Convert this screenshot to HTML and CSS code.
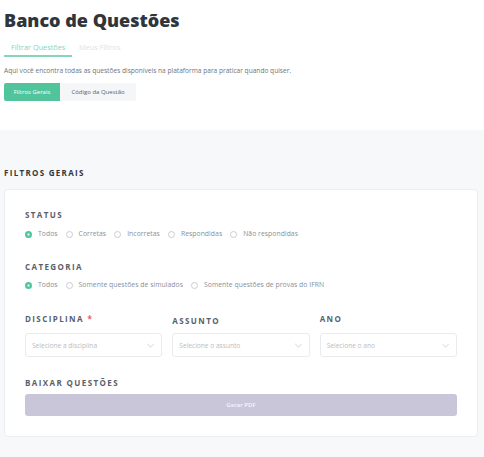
FILE: index.html
```html
<!DOCTYPE html>
<html lang="pt-BR">
<head>
<meta charset="utf-8">
<title>Banco de Questões</title>
<link rel="stylesheet" href="styles.css">
</head>
<body>
<header class="top">
  <h1 class="title">Banco de Questões</h1>
  <nav class="tabs">
    <span class="tab tab-active">Filtrar Questões</span>
    <span class="tab">Meus Filtros</span>
  </nav>
  <p class="desc">Aqui você encontra todas as questões disponíveis na plataforma para praticar quando quiser.</p>
  <div class="seg">
    <button class="seg-btn seg-active">Filtros Gerais</button>
    <button class="seg-btn">Código da Questão</button>
  </div>
</header>
<main class="section">
  <h2 class="section-title">FILTROS GERAIS</h2>
  <div class="card">
    <div class="label">STATUS</div>
    <div class="radios">
      <label class="radio"><span class="dot dot-on"></span>Todos</label>
      <label class="radio"><span class="dot"></span>Corretas</label>
      <label class="radio"><span class="dot"></span>Incorretas</label>
      <label class="radio"><span class="dot"></span>Respondidas</label>
      <label class="radio"><span class="dot"></span>Não respondidas</label>
    </div>
    <div class="label label-gap">CATEGORIA</div>
    <div class="radios radios-tight">
      <label class="radio"><span class="dot dot-on"></span>Todos</label>
      <label class="radio"><span class="dot"></span>Somente questões de simulados</label>
      <label class="radio"><span class="dot"></span>Somente questões de provas do IFRN</label>
    </div>
    <div class="fields">
      <div class="field">
        <div class="label">DISCIPLINA <span class="req">*</span></div>
        <div class="select"><span>Selecione a disciplina</span><svg class="chev" viewBox="0 0 10 6"><path d="M1 1l4 4 4-4" fill="none" stroke="#c3c6cd" stroke-width="0.9"/></svg></div>
      </div>
      <div class="field">
        <div class="label label-low">ASSUNTO</div>
        <div class="select"><span>Selecione o assunto</span><svg class="chev" viewBox="0 0 10 6"><path d="M1 1l4 4 4-4" fill="none" stroke="#c3c6cd" stroke-width="0.9"/></svg></div>
      </div>
      <div class="field">
        <div class="label">ANO</div>
        <div class="select"><span>Selecione o ano</span><svg class="chev" viewBox="0 0 10 6"><path d="M1 1l4 4 4-4" fill="none" stroke="#c3c6cd" stroke-width="0.9"/></svg></div>
      </div>
    </div>
    <div class="label label-gap2">BAIXAR QUESTÕES</div>
    <button class="pdf">Gerar PDF</button>
  </div>
</main>
</body>
</html>
```

FILE: styles.css
```css
* { box-sizing: border-box; }
html, body { margin: 0; padding: 0; }
body {
  font-family: "Open Sans", "Noto Sans", sans-serif;
  background: #ffffff;
  width: 484px;
  height: 457px;
  overflow: hidden;
  display: flex;
  flex-direction: column;
}
.top { padding: 0 4px; height: 130px; }
.title {
  margin: 0;
  padding-top: 6px;
  font-size: 18px;
  line-height: 28px;
  font-weight: 800;
  color: #30353b;
  letter-spacing: 0;
}
.tabs { display: flex; margin-top: 6px; height: 17px; }
.tab {
  padding: 0 7px;
  font-size: 7.3px;
  line-height: 15px;
  color: #dfe1e5;
  white-space: nowrap;
}
.tab-active {
  color: #86d6b8;
  border-bottom: 2px solid #86d6b8;
  width: 68px;
  padding: 0 0 0 7px;
}
.desc {
  margin: 9px 0 0;
  font-size: 6.6px;
  line-height: 10px;
  color: #6f747b;
}
.seg { display: flex; margin-top: 7px; height: 18px; }
.seg-btn {
  border: 0;
  font-family: inherit;
  font-size: 6px;
  height: 18px;
  padding: 0;
  color: #5c6168;
  background: #f5f6f8;
  width: 76px;
}
.seg-active {
  background: #52c49b;
  color: #ffffff;
  width: 56px;
  border-radius: 2px 0 0 2px;
}
.section {
  flex: 1;
  background: #f7f8fa;
  padding: 0 6px 0 4px;
}
.section-title {
  margin: 38px 0 0;
  font-size: 8px;
  line-height: 10px;
  font-weight: 700;
  letter-spacing: 1.3px;
  color: #33383e;
}
.card {
  margin-top: 11px;
  background: #ffffff;
  border: 1px solid #eceef1;
  border-radius: 4px;
  padding: 20px 20px 20px 20px;
  height: 248px;
}
.label {
  font-size: 8px;
  line-height: 10px;
  font-weight: 700;
  letter-spacing: 1.4px;
  color: #5a606a;
  white-space: nowrap;
}
.label-gap { margin-top: 23px; }
.label-gap2 { margin-top: 21px; }
.label-low { padding-top: 2px; }
.req { color: #ef5b6b; }
.radios {
  display: flex;
  gap: 8px;
  margin-top: 9px;
  height: 10px;
  align-items: center;
}
.radios-tight { margin-top: 8px; }
.radio {
  display: flex;
  align-items: center;
  gap: 6px;
  font-size: 6.8px;
  line-height: 10px;
  color: #8a8f98;
  letter-spacing: 0.05px;
}
.dot {
  width: 7px;
  height: 7px;
  border-radius: 50%;
  border: 1px solid #c9ccd2;
  background: #fff;
  flex: none;
}
.dot-on {
  border: 2px solid #52c49b;
  background: #ffffff;
  box-shadow: inset 0 0 0 0.5px #52c49b;
}
.fields {
  display: grid;
  grid-template-columns: 1fr 1fr 1fr;
  gap: 10px;
  margin-top: 24px;
}
.field { display: flex; flex-direction: column; }
.select {
  margin-top: 9px;
  height: 24px;
  border: 1px solid #eaebef;
  border-radius: 3px;
  display: flex;
  align-items: center;
  justify-content: space-between;
  padding: 0 6px 0 6px;
  font-size: 6.6px;
  color: #b9bdc4;
}
.label-low + .select { margin-top: 7px; }
.chev { width: 9px; height: 5px; }
.pdf {
  display: block;
  width: 100%;
  margin-top: 6px;
  height: 22px;
  border: 0;
  border-radius: 3px;
  background: #c8c6d8;
  color: #f6f5fa;
  font-family: inherit;
  font-size: 6px;
  font-weight: 600;
}
```
